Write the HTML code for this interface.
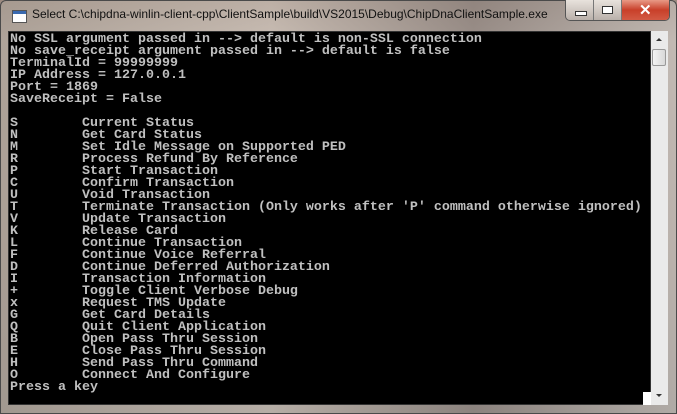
<!DOCTYPE html><html><head><style>
body{margin:0;width:677px;height:414px;overflow:hidden;background:linear-gradient(180deg,#9c8a80 0%,#b9aca4 10%,#a79a92 60%,#8c8682 100%);position:relative;font-family:"Liberation Sans",sans-serif}
.frame{position:absolute;left:0;top:0;width:675px;height:412px;border:1px solid #4a4a4a;border-radius:6px 6px 0 0;background:linear-gradient(90deg,rgba(170,160,150,.7),rgba(210,200,190,.6) 40%,rgba(140,130,125,.7) 70%,rgba(200,195,190,.6))}
.title{position:absolute;left:32px;top:7px;font-size:12px;color:#111;white-space:nowrap}
.icon{position:absolute;left:12px;top:10px;width:13px;height:11px;background:#fff;border:1px solid #555}
.icon:after{content:"";position:absolute;left:0;top:0;width:13px;height:3px;background:#3a6ab0}
.btns{position:absolute;left:565px;top:0;height:20px;width:103px;border:1px solid #555;border-top:none;border-radius:0 0 5px 5px;overflow:hidden;display:flex}
.b{height:20px;width:27px;background:linear-gradient(#e8e2dc,#b9b0aa);border-right:1px solid #777;position:relative}
.b.x{width:47px;border:none;background:linear-gradient(#e89a86,#c8402a 50%,#d25a44)}
.con{position:absolute;left:8px;top:31px;width:643px;height:374px;background:#000;border:1px solid #333;box-sizing:border-box}
pre{margin:0;position:absolute;left:10px;top:34px;color:#c0c0c0;font-family:"Liberation Mono",monospace;font-size:13.33px;line-height:12px;font-weight:bold;letter-spacing:0}
.sb{position:absolute;left:651px;top:31px;width:17px;height:374px;background:#eaeaea}
.th{position:absolute;left:652px;top:49px;width:14px;height:17px;border:1px solid #999;border-radius:2px;background:linear-gradient(90deg,#f4f4f4,#d8d8d8);box-sizing:border-box}
.corner{position:absolute;left:643px;top:392px;width:8px;height:13px;background:#fff}
</style></head><body>
<div class="frame"></div>
<div class="icon"></div>
<div class="title">Select C:\chipdna-winlin-client-cpp\ClientSample\build\VS2015\Debug\ChipDnaClientSample.exe</div>
<div class="btns"><div class="b"><div style="position:absolute;left:9px;top:11px;width:10px;height:3px;border:1px solid #333;background:#fff"></div></div><div class="b"><div style="position:absolute;left:8px;top:6px;width:9px;height:6px;border:1px solid #333;background:#fff"></div></div><div class="b x"><div style="position:absolute;left:17px;top:1px;color:#fff;font-weight:bold;font-size:15px">✕</div></div></div>
<div class="con"></div>
<div class="sb"><div style="position:absolute;left:5px;top:7px;border:3px solid transparent;border-bottom:3px solid #333;border-top:none;width:0"></div><div style="position:absolute;left:5px;top:363px;border:3px solid transparent;border-top:3px solid #333;border-bottom:none;width:0"></div></div>
<div class="th"></div>
<div class="corner"></div>
<pre>No SSL argument passed in --&gt; default is non-SSL connection
No save_receipt argument passed in --&gt; default is false
TerminalId = 99999999
IP Address = 127.0.0.1
Port = 1869
SaveReceipt = False

S        Current Status
N        Get Card Status
M        Set Idle Message on Supported PED
R        Process Refund By Reference
P        Start Transaction
C        Confirm Transaction
U        Void Transaction
T        Terminate Transaction (Only works after 'P' command otherwise ignored)
V        Update Transaction
K        Release Card
L        Continue Transaction
F        Continue Voice Referral
D        Continue Deferred Authorization
I        Transaction Information
+        Toggle Client Verbose Debug
x        Request TMS Update
G        Get Card Details
Q        Quit Client Application
B        Open Pass Thru Session
E        Close Pass Thru Session
H        Send Pass Thru Command
O        Connect And Configure
Press a key</pre>
</body></html>
